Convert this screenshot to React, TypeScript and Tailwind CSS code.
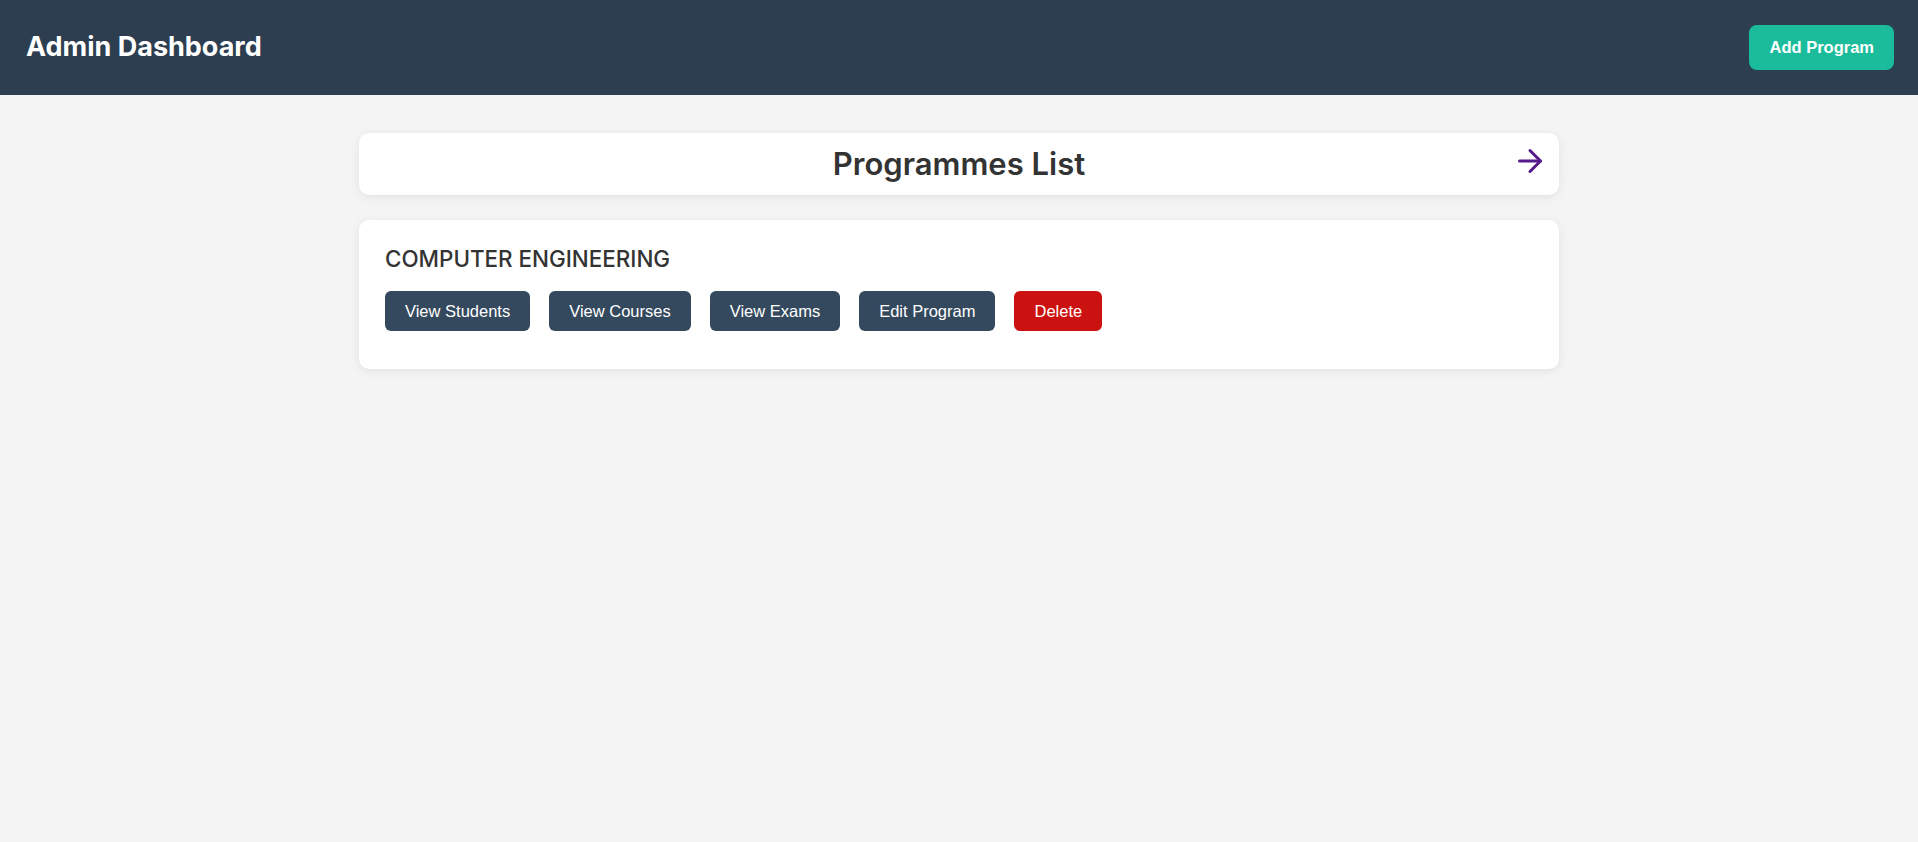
import { ArrowRight } from "lucide-react"

const actions = ["View Students", "View Courses", "View Exams", "Edit Program"]

function App() {
	return (
		<div className="min-h-screen bg-[#f4f4f4] font-['Inter',sans-serif] text-[#333]">
			<header className="h-[95px] bg-[#2c3e50] flex items-center justify-between px-6">
				<h1 className="text-[27px] font-bold text-white leading-[1.2] pl-[2px]">Admin Dashboard</h1>
				<button className="h-[45px] px-5 rounded-lg bg-[#1abc9c] text-white font-bold text-[16.5px] font-['Liberation_Sans',Arial,sans-serif]">
					Add Program
				</button>
			</header>

			<main className="max-w-[1200px] mx-auto pt-[38px] flex flex-col gap-[25px]">
				{/* Title card */}
				<div className="relative bg-white rounded-[10px] shadow-[0_2px_10px_rgba(0,0,0,0.08)] py-[13px] flex justify-center">
					<h2 className="text-[31px] font-semibold leading-[36px]">Programmes List</h2>
					<a href="#" className="absolute right-[11px] top-[10px] text-[#551a8b]">
						<ArrowRight size={36} strokeWidth={2} />
					</a>
				</div>

				{/* Programme */}
				<div className="bg-white rounded-[10px] shadow-[0_2px_10px_rgba(0,0,0,0.08)] pl-[26px] pr-6 pt-[26px] pb-[38px]">
					<h3 className="text-[22.4px] font-medium leading-[1.2] mb-[18px]">COMPUTER ENGINEERING</h3>
					<div className="flex gap-[19px] font-['Liberation_Sans',Arial,sans-serif]">
						{actions.map((label) => (
							<button
								key={label}
								className="h-10 px-5 rounded-md bg-[#34495e] text-white text-[16.5px]"
							>
								{label}
							</button>
						))}
						<button className="h-10 px-5 rounded-md bg-[#cc1111] text-white text-[16.5px]">
							Delete
						</button>
					</div>
				</div>
			</main>
		</div>
	)
}

export default App
